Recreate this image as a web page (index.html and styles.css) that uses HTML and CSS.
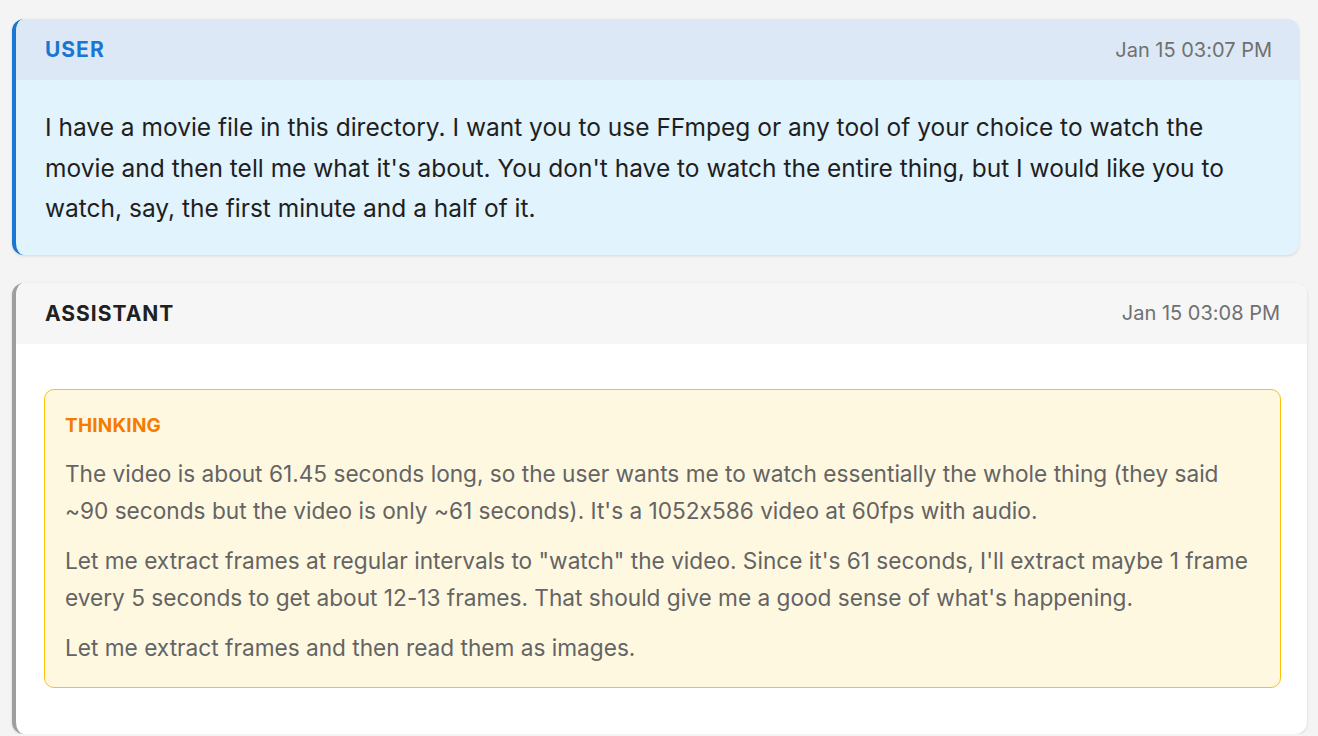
FILE: index.html
```html
<!DOCTYPE html>
<html lang="en">
<head>
<meta charset="utf-8">
<title>Conversation</title>
<link rel="stylesheet" href="styles.css">
</head>
<body>
<div class="thread">
  <div class="msg msg-user">
    <div class="msg-head">
      <span class="role">USER</span>
      <span class="time">Jan 15 03:07 PM</span>
    </div>
    <div class="msg-body">
      <p class="user-text">I have a movie file in this directory. I want you to use FFmpeg or any tool of your choice to watch the movie and then tell me what it's about. You don't have to watch the entire thing, but I would like you to watch, say, the first minute and a half of it.</p>
    </div>
  </div>
  <div class="msg msg-assistant">
    <div class="msg-head">
      <span class="role">ASSISTANT</span>
      <span class="time">Jan 15 03:08 PM</span>
    </div>
    <div class="msg-body">
      <div class="thinking">
        <div class="thinking-label">THINKING</div>
        <p>The video is about 61.45 seconds long, so the user wants me to watch essentially the whole thing (they said ~90 seconds but the video is only ~61 seconds). It's a 1052x586 video at 60fps with audio.</p>
        <p>Let me extract frames at regular intervals to "watch" the video. Since it's 61 seconds, I'll extract maybe 1 frame every 5 seconds to get about 12-13 frames. That should give me a good sense of what's happening.</p>
        <p>Let me extract frames and then read them as images.</p>
      </div>
    </div>
  </div>
</div>
</body>
</html>
```
FILE: styles.css
```css
* { box-sizing: border-box; }
html, body { margin: 0; padding: 0; }
body {
  background: #f4f4f4;
  font-family: Inter, "Noto Sans", "DejaVu Sans", sans-serif;
  font-feature-settings: "calt" 0;
  color: #222;
  overflow: hidden;
}
.thread {
  display: flex;
  flex-direction: column;
  gap: 28px;
  padding: 19px 0 0 12px;
}
.msg {
  border-radius: 12px;
  overflow: hidden;
  box-shadow: 0 1px 3px rgba(0,0,0,0.12);
  border-left: 4px solid #1976d2;
}
.msg-user {
  margin-right: 19px;
  background: #e1f3fd;
}
.msg-assistant {
  margin-right: 11px;
  background: #fff;
  border-left-color: #9e9e9e;
}
.msg-head {
  height: 61px;
  display: flex;
  align-items: center;
  justify-content: space-between;
  padding: 0 27px 0 29px;
}
.msg-user .msg-head { background: #dce8f5; }
.msg-assistant .msg-head { background: #f6f6f6; }
.role {
  font-size: 21px;
  font-weight: 700;
  letter-spacing: 1px;
}
.msg-user .role { color: #1976d2; }
.msg-assistant .role { color: #212121; }
.time {
  font-size: 20px;
  color: #707070;
}
.msg-user .msg-body {
  padding: 27px 29px 26px;
}
.user-text {
  margin: 0;
  font-size: 24.5px;
  line-height: 40.5px;
  color: #1f1f1f;
}
.msg-assistant .msg-body {
  padding: 45px 26px 46px 28px;
}
.thinking {
  background: #fff8e1;
  border: 1px solid #ffc107;
  border-radius: 10px;
  padding: 24px 20px 21px;
}
.thinking-label {
  font-size: 19px;
  font-weight: 700;
  color: #f57c00;
  line-height: 24px;
  margin-bottom: 17px;
  letter-spacing: 0.2px;
}
.thinking p {
  margin: 0 0 13px;
  font-size: 22.65px;
  line-height: 37px;
  color: #646464;
}
.thinking p:last-child { margin-bottom: 0; }
```
